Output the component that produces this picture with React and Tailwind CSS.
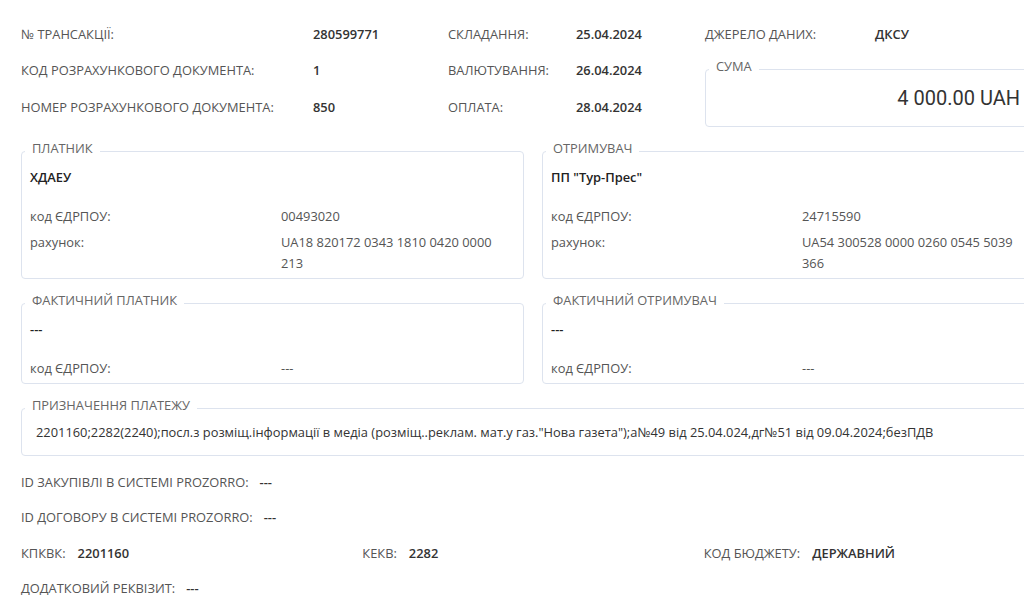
import React from "react";

const font = { fontFamily: "'Open Sans', 'Noto Sans', sans-serif" };

function Box({ title, className = "", children }) {
  return (
    <fieldset className={`border border-[#dde3ee] rounded-[4px] px-0 ${className}`}>
      <legend className="ml-[3px] px-[7px] pb-[6px] leading-[18px] text-[#666]">{title}</legend>
      {children}
    </fieldset>
  );
}

function Party({ title, name, code, account }) {
  return (
    <Box title={title} className="w-[503px] pb-[4px]">
      <div className="pl-[8px] pt-[4px] leading-[21px]">
        <div className="font-semibold text-[#222]">{name}</div>
        <div className="mt-[18px] grid grid-cols-[251px_222px] gap-y-[5px] text-[#555]">
          <div>код ЄДРПОУ:</div>
          <div>{code}</div>
          {account && (
            <>
              <div>рахунок:</div>
              <div>{account}</div>
            </>
          )}
        </div>
      </div>
    </Box>
  );
}

function Pair({ label, value, gap = "gap-3" }) {
  return (
    <div className={`flex items-center ${gap}`}>
      <span className="text-[#555]">{label}</span>
      <span className="font-semibold text-[#333]">{value}</span>
    </div>
  );
}

export default function App() {
  const top = [
    ["№ ТРАНСАКЦІЇ:", "280599771", "СКЛАДАННЯ:", "25.04.2024"],
    ["КОД РОЗРАХУНКОВОГО ДОКУМЕНТА:", "1", "ВАЛЮТУВАННЯ:", "26.04.2024"],
    ["НОМЕР РОЗРАХУНКОВОГО ДОКУМЕНТА:", "850", "ОПЛАТА:", "28.04.2024"],
  ];

  return (
    <div className="w-[1024px] h-[595px] overflow-hidden bg-white text-[12.87px]" style={font}>
      <div className="w-[1066px] pl-[21px] pr-[21px] pt-[16px]">
        {/* header fields */}
        <div className="flex">
          <div className="grid grid-cols-[292px_135px_128px_129px] auto-rows-[36.5px] items-center">
            {top.map((r) => (
              <React.Fragment key={r[0]}>
                <div className="text-[#555]">{r[0]}</div>
                <div className="font-semibold text-[#333]">{r[1]}</div>
                <div className="text-[#555]">{r[2]}</div>
                <div className="font-semibold text-[#333]">{r[3]}</div>
              </React.Fragment>
            ))}
          </div>
          <div className="flex-1 flex flex-col">
            <div className="h-[36.5px] flex items-center">
              <span className="w-[170px] text-[#555]">ДЖЕРЕЛО ДАНИХ:</span>
              <span className="font-semibold text-[#333]">ДКСУ</span>
            </div>
            <Box title="СУМА" className="mt-[4.5px] pb-[14px]">
              <div
                className="pt-[3px] pr-[24px] text-right text-[20px] leading-[28px] text-[#333]"
                style={{ fontFamily: "Roboto, 'Open Sans', sans-serif" }}
              >
                4 000.00 UAH
              </div>
            </Box>
          </div>
        </div>

        {/* parties */}
        <div className="mt-[12px] flex gap-[18px]">
          <Party
            title="ПЛАТНИК"
            name="ХДАЕУ"
            code="00493020"
            account="UA18 820172 0343 1810 0420 0000 213"
          />
          <Party
            title="ОТРИМУВАЧ"
            name='ПП "Тур-Прес"'
            code="24715590"
            account="UA54 300528 0000 0260 0545 5039 366"
          />
        </div>

        <div className="mt-[12px] flex gap-[18px]">
          <Party title="ФАКТИЧНИЙ ПЛАТНИК" name="---" code="---" />
          <Party title="ФАКТИЧНИЙ ОТРИМУВАЧ" name="---" code="---" />
        </div>

        <Box title="ПРИЗНАЧЕННЯ ПЛАТЕЖУ" className="mt-[12px] pb-[12px]">
          <div className="pl-[14px] pt-[1.5px] leading-[21px] text-[#333]">
            2201160;2282(2240);посл.з розміщ.інформації в медіа (розміщ..реклам. мат.у газ."Нова газета");а№49 від 25.04.024,дг№51 від 09.04.2024;безПДВ
          </div>
        </Box>

        {/* footer fields */}
        <div className="mt-[9px] flex flex-col">
          <div className="h-[35.5px] flex items-center">
            <Pair label="ID ЗАКУПІВЛІ В СИСТЕМІ PROZORRO:" value="---" gap="gap-[11px]" />
          </div>
          <div className="h-[35.5px] flex items-center">
            <Pair label="ID ДОГОВОРУ В СИСТЕМІ PROZORRO:" value="---" gap="gap-[11px]" />
          </div>
          <div className="h-[35.5px] grid grid-cols-3 items-center">
            <Pair label="КПКВК:" value="2201160" />
            <Pair label="КЕКВ:" value="2282" />
            <Pair label="КОД БЮДЖЕТУ:" value="ДЕРЖАВНИЙ" />
          </div>
          <div className="h-[35.5px] flex items-center">
            <Pair label="ДОДАТКОВИЙ РЕКВІЗИТ:" value="---" gap="gap-[11px]" />
          </div>
        </div>
      </div>
    </div>
  );
}
